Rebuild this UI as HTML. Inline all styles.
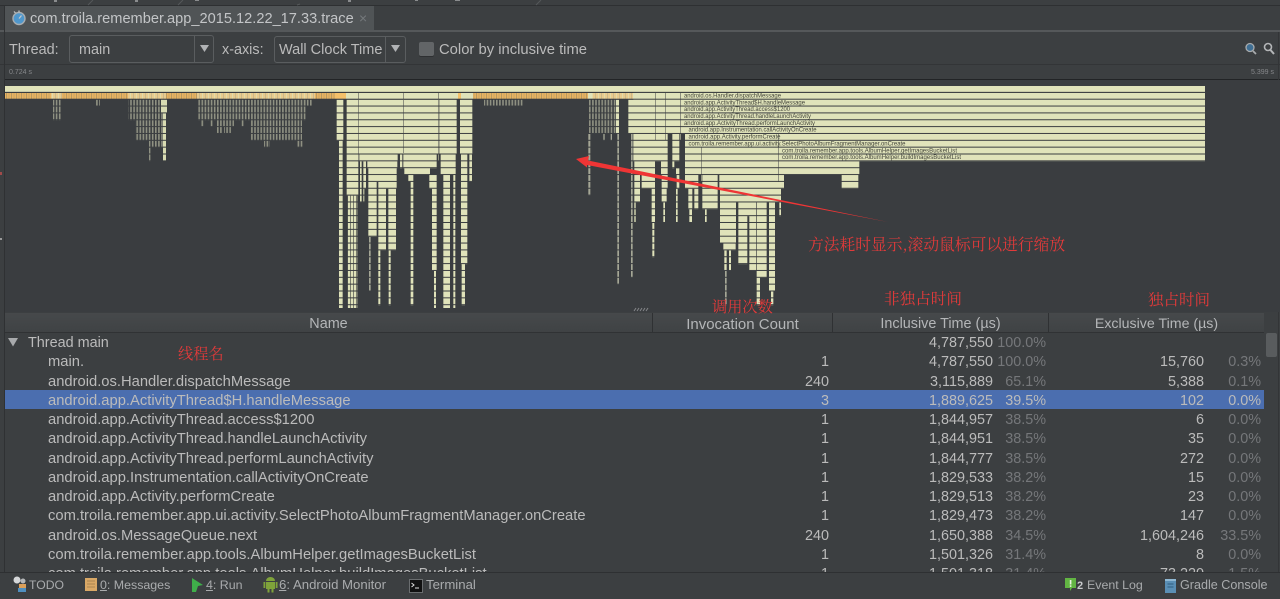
<!DOCTYPE html>
<html><head><meta charset="utf-8"><style>
html,body{margin:0;padding:0;background:#3c3f41}
#r{position:relative;width:1280px;height:599px;overflow:hidden;background:#3c3f41;font-family:"Liberation Sans","Noto Sans CJK SC",sans-serif;color:#bbb;font-size:14.4px;filter:blur(.3px)}
.a{position:absolute;white-space:nowrap}
.t{position:absolute;white-space:nowrap;line-height:18px;height:18px}
.n{left:48px;font-size:14.75px}
.c{position:absolute;right:451px;white-space:nowrap;line-height:18px}
.i{position:absolute;right:287px;white-space:nowrap;line-height:18px}
.ip{position:absolute;right:234px;white-space:nowrap;line-height:18px;color:#75777a}
.e{position:absolute;right:76px;white-space:nowrap;line-height:18px}
.ep{position:absolute;right:19px;white-space:nowrap;line-height:18px;color:#75777a}
.h{position:absolute;top:313px;height:20px;line-height:23px;text-align:center;color:#b4b6b8;background:linear-gradient(#46494b,#3f4244);border-right:1px solid #2f3133;box-sizing:border-box}
.z{color:#e23a3a;font-family:"Noto Serif CJK SC","Noto Sans CJK SC",serif;position:absolute;white-space:nowrap;line-height:18px}
.s{position:absolute;top:576px;line-height:18px;font-size:12.6px;color:#a9abad;white-space:nowrap}
.s u{text-decoration:underline}
</style></head><body><div id="r">

<!-- top strip -->
<div class="a" style="left:0;top:0;width:1280px;height:5px;background:#3c3f41;border-bottom:1px solid #2e3032"></div>
<svg class="a" style="left:0;top:0" width="1280" height="6"><g stroke="#55585a" fill="none"><path d="M88 5l5-5M178 5l5-5M300 4l-3 1M536 5l5-5"/></g><g fill="#8a8c8e"><rect x="54" y="0" width="3" height="2"/><rect x="135" y="0" width="3" height="2"/><rect x="195" y="0" width="4" height="1"/><rect x="348" y="0" width="3" height="2"/><rect x="415" y="0" width="3" height="1"/><rect x="455" y="0" width="5" height="1"/></g></svg>

<!-- tab row -->
<div class="a" style="left:5px;top:6px;width:369px;height:24px;background:#505456"></div>
<div class="a" style="left:0;top:30px;width:1280px;height:2px;background:#55585a"></div>
<div class="a" style="left:30px;top:10px;font-size:14.6px;line-height:19px;color:#c3c5c7">com.troila.remember.app_2015.12.22_17.33.trace</div>
<div class="a" style="left:359px;top:11px;font-size:14px;line-height:14px;color:#75797c">×</div>
<svg class="a" style="left:10px;top:8px" width="18" height="20"><circle cx="9" cy="10.5" r="6" fill="#4f97cc" stroke="#a8adb0" stroke-width="1.4"/><path d="M9 10.5l2.5-3M9 2.5v2M4 3.5l1.5 1.5" stroke="#c5c8ca" stroke-width="1.2" fill="none"/></svg>

<!-- toolbar -->
<div class="a" style="left:9px;top:41px;line-height:18px">Thread:</div>
<div class="a" style="left:69px;top:35px;width:145px;height:28px;box-sizing:border-box;border:1px solid #5a5d5f;border-radius:3px;background:#3c3f41"></div>
<div class="a" style="left:194px;top:35px;width:1px;height:28px;background:#5a5d5f"></div>
<div class="a" style="left:79px;top:41px;line-height:18px">main</div>
<svg class="a" style="left:199px;top:44px" width="12" height="9"><path d="M1 1h9l-4.500 7z" fill="#b0b2b4"/></svg>
<div class="a" style="left:222px;top:41px;line-height:18px">x-axis:</div>
<div class="a" style="left:274px;top:36px;width:132px;height:27px;box-sizing:border-box;border:1px solid #5a5d5f;border-radius:3px"></div>
<div class="a" style="left:385px;top:36px;width:1px;height:27px;background:#5a5d5f"></div>
<div class="a" style="left:279px;top:41px;line-height:18px;font-size:14.5px">Wall Clock Time</div>
<svg class="a" style="left:390px;top:44px" width="12" height="9"><path d="M1 1h9l-4.500 7z" fill="#b0b2b4"/></svg>
<div class="a" style="left:419px;top:42px;width:15px;height:14px;background:#626567;border-radius:2px;box-shadow:0 1px 0 #2e3032"></div>
<div class="a" style="left:439px;top:41px;line-height:18px;font-size:14.8px">Color by inclusive time</div>
<svg class="a" style="left:1243px;top:41px" width="34" height="15"><circle cx="7" cy="6.500" r="4" fill="#3f6f94" stroke="#a8abad" stroke-width="1.300"/><path d="M10 10l3 3" stroke="#a8abad" stroke-width="1.800"/><circle cx="25" cy="6" r="3.500" fill="none" stroke="#b4b6b8" stroke-width="1.600"/><path d="M27.500 9l3.500 4" stroke="#b4b6b8" stroke-width="2"/></svg>

<!-- timeline strip -->
<div class="a" style="left:0;top:64px;width:1280px;height:1px;background:#333537"></div>
<div class="a" style="left:9px;top:69px;font-size:7px;line-height:8px;color:#85878a">0.724 s</div>
<div class="a" style="right:6px;top:69px;font-size:7px;line-height:8px;color:#85878a">5.399 s</div>
<div class="a" style="left:5px;top:79px;width:1275px;height:1px;background:#222426"></div>

<!-- left edge -->
<div class="a" style="left:4px;top:6px;width:1px;height:566px;background:#2f3133"></div>
<div class="a" style="left:1278px;top:32px;width:1px;height:540px;background:#333537"></div>
<div class="a" style="left:0;top:172px;width:2px;height:3px;background:#a04a4a"></div>
<div class="a" style="left:0;top:238px;width:2px;height:2px;background:#9a9a9a"></div>

<!-- flame chart -->
<svg class="a" style="left:0;top:80px" width="1280" height="232" viewBox="0 80 1280 232">
<defs>
<pattern id="o" width="5" height="10" patternUnits="userSpaceOnUse"><rect width="5" height="10" fill="#e9b360"/><rect x="1" width="1" height="10" fill="#b89a62"/><rect x="3.500" width="1" height="10" fill="#c9a566"/></pattern>
<pattern id="m" width="6" height="10" patternUnits="userSpaceOnUse"><rect width="6" height="10" fill="#e8cb8e"/><rect x="1" width="1" height="10" fill="#cbb98a"/><rect x="4" width="1" height="10" fill="#e3dba8"/></pattern>
<pattern id="k" width="3.100" height="10" patternUnits="userSpaceOnUse"><rect width="1.600" height="10" fill="#8f9182"/></pattern>
<pattern id="s" width="3" height="10" patternUnits="userSpaceOnUse"><rect width="2" height="10" fill="#dfe2b9"/><rect x="2" width="1" height="10" fill="#7b7d6e"/></pattern>
<pattern id="g" width="10" height="6.850" y="86" patternUnits="userSpaceOnUse"><rect y="5.850" width="10" height="1" fill="#3a3d40"/></pattern>
</defs>
<rect x="5" y="80" width="1275" height="232" fill="#3a3d40"/>
<rect x="5" y="86" width="1200" height="6" fill="#e0e3ba"/>
<!-- orange row -->
<rect x="5" y="93" width="332" height="6" fill="url(#o)"/>
<rect x="51" y="93" width="11" height="6" fill="url(#m)"/>
<rect x="128" y="93" width="38" height="6" fill="url(#m)"/>
<rect x="197" y="93" width="118" height="6" fill="url(#m)"/>
<rect x="335" y="93" width="12" height="6" fill="#f4c06a"/>
<rect x="346" y="93" width="112" height="6" fill="#e0e3ba"/>
<rect x="458" y="93" width="3" height="6" fill="#f4c06a"/>
<rect x="461" y="93" width="12" height="6" fill="#e0e3ba"/>
<rect x="473" y="93" width="115" height="6" fill="url(#o)"/>
<rect x="588" y="93" width="4" height="6" fill="#e0e3ba"/>
<rect x="592" y="93" width="41" height="6" fill="url(#m)"/>
<rect x="633" y="93" width="572" height="6" fill="#e0e3ba"/>
<!-- ticks -->
<g fill="url(#k)">
<rect x="53" y="99.700" width="8" height="20.500"/>
<rect x="95" y="99.700" width="5" height="6.800"/>
<rect x="128.500" y="99.700" width="36" height="20.500"/>
<rect x="135" y="120.200" width="28" height="20.600"/>
<rect x="149" y="140.800" width="16" height="6.800"/>
<rect x="149" y="147.600" width="2" height="13.700"/>
<rect x="198" y="99.700" width="108" height="20.500"/>
<rect x="305" y="99.700" width="8" height="6.800"/>
<rect x="201" y="120.200" width="3" height="6.800"/>
<rect x="210" y="120.200" width="3" height="6.800"/>
<rect x="217" y="120.200" width="17" height="6.800"/>
<rect x="241" y="120.200" width="3" height="6.800"/>
<rect x="251" y="120.200" width="51" height="20.600"/>
<rect x="217" y="127" width="6" height="6.800"/>
<rect x="224" y="127" width="7" height="6.800"/>
<rect x="264" y="140.800" width="6" height="6.800"/>
<rect x="297" y="140.800" width="6" height="6.800"/>
<rect x="484" y="99.700" width="39" height="6.800"/>
<rect x="588" y="99.700" width="28" height="34.200"/>
</g>
<rect x="161" y="99.700" width="6" height="13" fill="#d8dbb2"/>
<rect x="163" y="112.700" width="3" height="48" fill="#d8dbb2"/>
<rect x="347.700" y="195.600" width="9.600" height="112.500" fill="url(#s)"/>
<!-- solid columns, left (coords: x*3, row index) -->
<g transform="translate(0,86) scale(.33333,6.850)" fill="#e0e3ba">
<path d="M1010 2H1030V8H1010zM1017 8H1028V33H1017zM1040 2H1075V16H1040zM1076 2H1314V10H1076zM1078 10H1193V11H1078zM1102 11H1192V12H1102zM1105 12H1190V14H1105zM1105 14H1130V22H1105zM1135 14H1158V24H1135zM1158 14H1190V15H1158zM1165 15H1188V24H1165zM1080 11H1085V17H1080zM1090 11H1098V15H1090zM1090 15H1093V17H1090zM1200 10H1207V12H1200zM1210 10H1310V12H1210zM1213 12H1290V13H1213zM1225 13H1240V14H1225zM1232 14H1240V32H1232zM1288 13H1296V15H1288zM1296 13H1310V27H1296zM1302 27H1308V33H1302zM1318 2H1370V10H1318zM1322 10H1367V13H1322zM1330 13H1350V33H1330zM1360 12H1366V33H1360zM1380 2H1417V10H1380zM1383 10H1402V26H1383zM1385 26H1395V32H1385zM1408 10H1416V14H1408zM1135 24H1141V32H1135zM1166 24H1172V32H1166z"/>
<path fill="#a5a796" d="M1107 22H1112V30H1107z"/>
</g>
<!-- solid columns, right -->
<g transform="translate(570,86) scale(.33333,6.850)" fill="#e0e3ba">
<path d="M138 2H147V7H138zM175 2H190V7H175zM190 2H1905V7H190zM190 7H293V11H190zM307 7H328V11H307zM345 7H1905V11H345zM1905 1H190V2H1905zM193 11H255V13H193zM273 11H293V13H273zM307 11H313V12H307zM318 12H328V13H318zM345 11H868V13H345zM193 13H210V17H193zM215 13H255V15H215zM275 13H293V15H275zM320 13H328V15H320zM345 13H385V15H345zM397 13H443V18H397zM448 13H642V15H448zM815 13H865V15H815zM245 15H255V20H245zM247 20H253V25H247zM275 15H290V17H275zM280 17H285V20H280zM318 15H323V20H318zM355 15H367V18H355zM373 15H385V18H373zM358 18H366V20H358zM405 18H410V20H405zM193 17H197V20H193zM450 15H628V17H450zM450 17H498V23H450zM460 23H497V24H460zM463 24H470V27H463zM477 24H483V27H477zM505 17H558V19H505zM505 19H532V26H505zM538 19H558V27H538zM560 17H590V28H560zM560 28H570V32H560zM597 17H615V30H597zM603 30H610V32H603zM628 15H633V19H628zM348 13H350V15H348z"/>
<path fill="#a5a796" d="M55 7H61V16H55zM142 7H147V29H142zM183 7H188V28H183zM465 27H470V32H465zM100 7H104V8H100zM122 7H126V8H122z"/>
</g>
<!-- verticals -->
<g fill="#8f917f">
<rect x="358" y="93" width="1" height="68"/><rect x="438" y="93" width="1" height="68"/><rect x="403" y="93" width="1" height="60"/>
<rect x="655" y="93" width="1" height="47"/><rect x="665" y="93" width="1" height="47"/><rect x="680" y="93" width="1" height="47"/><rect x="778" y="134" width="1" height="48"/><rect x="701" y="147" width="1" height="34"/>
</g>
<!-- row gaps -->
<rect x="5" y="86" width="1200" height="226" fill="url(#g)"/>
<rect x="5" y="308" width="1275" height="5" fill="#3a3d40"/>
<!-- row labels -->
<g font-family="Liberation Sans,sans-serif" font-size="6.300" fill="#44463c">
<text x="684" y="97.500" textLength="97" lengthAdjust="spacingAndGlyphs">android.os.Handler.dispatchMessage</text>
<text x="684" y="104.300" textLength="121" lengthAdjust="spacingAndGlyphs">android.app.ActivityThread$H.handleMessage</text>
<text x="684" y="111.200" textLength="106" lengthAdjust="spacingAndGlyphs">android.app.ActivityThread.access$1200</text>
<text x="684" y="118" textLength="127" lengthAdjust="spacingAndGlyphs">android.app.ActivityThread.handleLaunchActivity</text>
<text x="684" y="124.900" textLength="131" lengthAdjust="spacingAndGlyphs">android.app.ActivityThread.performLaunchActivity</text>
<text x="688.500" y="131.700" textLength="128" lengthAdjust="spacingAndGlyphs">android.app.Instrumentation.callActivityOnCreate</text>
<text x="688.500" y="138.600" textLength="92" lengthAdjust="spacingAndGlyphs">android.app.Activity.performCreate</text>
<text x="688.500" y="145.400" textLength="217" lengthAdjust="spacingAndGlyphs">com.troila.remember.app.ui.activity.SelectPhotoAlbumFragmentManager.onCreate</text>
<text x="782" y="152.300" textLength="175" lengthAdjust="spacingAndGlyphs">com.troila.remember.app.tools.AlbumHelper.getImagesBucketList</text>
<text x="782" y="159.100" textLength="179" lengthAdjust="spacingAndGlyphs">com.troila.remember.app.tools.AlbumHelper.buildImagesBucketList</text>
</g>
<!-- arrow -->
<polygon points="576,159 589,156 588,160.500 888,222 587,165 587,167.500" fill="#ef3535"/>
<path d="M634 311l2-3M637 311l2-3M640 311l2-3M643 311l2-3M646 311l2-3" stroke="#85878a" stroke-width="1"/>
</svg>

<!-- table header -->
<div class="h" style="left:5px;width:648px">Name</div>
<div class="h" style="left:653px;width:180px;font-size:15px">Invocation Count</div>
<div class="h" style="left:833px;width:216px">Inclusive Time (µs)</div>
<div class="h" style="left:1049px;width:215px;border-right:0;font-size:14.2px">Exclusive Time (µs)</div>
<div class="a" style="left:5px;top:332px;width:1259px;height:1px;background:#303234"></div>

<!-- selection -->
<div class="a" style="left:5px;top:390px;width:1259px;height:19px;background:#4b6eaf"></div>

<!-- rows -->
<svg class="a" style="left:8px;top:338px" width="11" height="9"><path d="M0 0h10l-5 8.500z" fill="#a8aaac"/></svg>
<div class="a" style="left:0;top:1px;width:1280px;height:571px;overflow:hidden">
<div class="t" style="left:28px;top:333px">Thread main</div>
<div class="i" style="top:333px">4,787,550</div><div class="ip" style="top:333px">100.0%</div>

<div class="t n" style="top:352px">main.</div>
<div class="c" style="top:352px">1</div><div class="i" style="top:352px">4,787,550</div><div class="ip" style="top:352px">100.0%</div><div class="e" style="top:352px">15,760</div><div class="ep" style="top:352px">0.3%</div>

<div class="t n" style="top:372px">android.os.Handler.dispatchMessage</div>
<div class="c" style="top:372px">240</div><div class="i" style="top:372px">3,115,889</div><div class="ip" style="top:372px">65.1%</div><div class="e" style="top:372px">5,388</div><div class="ep" style="top:372px">0.1%</div>

<div class="t n" style="top:391px">android.app.ActivityThread$H.handleMessage</div>
<div class="c" style="top:391px">3</div><div class="i" style="top:391px">1,889,625</div><div class="ip" style="top:391px;color:#bbb">39.5%</div><div class="e" style="top:391px">102</div><div class="ep" style="top:391px;color:#bbb">0.0%</div>

<div class="t n" style="top:410px">android.app.ActivityThread.access$1200</div>
<div class="c" style="top:410px">1</div><div class="i" style="top:410px">1,844,957</div><div class="ip" style="top:410px">38.5%</div><div class="e" style="top:410px">6</div><div class="ep" style="top:410px">0.0%</div>

<div class="t n" style="top:429px">android.app.ActivityThread.handleLaunchActivity</div>
<div class="c" style="top:429px">1</div><div class="i" style="top:429px">1,844,951</div><div class="ip" style="top:429px">38.5%</div><div class="e" style="top:429px">35</div><div class="ep" style="top:429px">0.0%</div>

<div class="t n" style="top:449px">android.app.ActivityThread.performLaunchActivity</div>
<div class="c" style="top:449px">1</div><div class="i" style="top:449px">1,844,777</div><div class="ip" style="top:449px">38.5%</div><div class="e" style="top:449px">272</div><div class="ep" style="top:449px">0.0%</div>

<div class="t n" style="top:468px">android.app.Instrumentation.callActivityOnCreate</div>
<div class="c" style="top:468px">1</div><div class="i" style="top:468px">1,829,533</div><div class="ip" style="top:468px">38.2%</div><div class="e" style="top:468px">15</div><div class="ep" style="top:468px">0.0%</div>

<div class="t n" style="top:487px">android.app.Activity.performCreate</div>
<div class="c" style="top:487px">1</div><div class="i" style="top:487px">1,829,513</div><div class="ip" style="top:487px">38.2%</div><div class="e" style="top:487px">23</div><div class="ep" style="top:487px">0.0%</div>

<div class="t n" style="top:506px">com.troila.remember.app.ui.activity.SelectPhotoAlbumFragmentManager.onCreate</div>
<div class="c" style="top:506px">1</div><div class="i" style="top:506px">1,829,473</div><div class="ip" style="top:506px">38.2%</div><div class="e" style="top:506px">147</div><div class="ep" style="top:506px">0.0%</div>

<div class="t n" style="top:526px">android.os.MessageQueue.next</div>
<div class="c" style="top:526px">240</div><div class="i" style="top:526px">1,650,388</div><div class="ip" style="top:526px">34.5%</div><div class="e" style="top:526px">1,604,246</div><div class="ep" style="top:526px">33.5%</div>

<div class="t n" style="top:545px">com.troila.remember.app.tools.AlbumHelper.getImagesBucketList</div>
<div class="c" style="top:545px">1</div><div class="i" style="top:545px">1,501,326</div><div class="ip" style="top:545px">31.4%</div><div class="e" style="top:545px">8</div><div class="ep" style="top:545px">0.0%</div>

<div class="t n" style="top:564px">com.troila.remember.app.tools.AlbumHelper.buildImagesBucketList</div>
<div class="c" style="top:564px">1</div><div class="i" style="top:564px">1,501,318</div><div class="ip" style="top:564px">31.4%</div><div class="e" style="top:564px">73,220</div><div class="ep" style="top:564px">1.5%</div>
</div>

<!-- scrollbar -->
<div class="a" style="left:1266px;top:333px;width:11px;height:24px;background:#595c5e;border-radius:2px"></div>

<!-- annotations -->
<div class="z" style="left:808px;top:235px;font-size:15.750px">方法耗时显示,滚动鼠标可以进行缩放</div>
<div class="z" style="left:712px;top:298px;font-size:15.200px">调用次数</div>
<div class="z" style="left:884px;top:289px;font-size:15.600px">非独占时间</div>
<div class="z" style="left:1148px;top:290px;font-size:15.500px">独占时间</div>
<div class="z" style="left:178px;top:345px;font-size:15.200px">线程名</div>

<!-- status bar -->
<div class="a" style="left:0;top:572px;width:1280px;height:27px;background:#3c3f41;border-top:1px solid #2e3032;box-sizing:border-box"></div>
<svg class="a" style="left:0;top:574px" width="1280" height="22">
<circle cx="17" cy="6" r="3.500" fill="#d5d7d9"/><circle cx="23" cy="7" r="2.500" fill="#b5b7b9"/><rect x="19" y="10" width="7" height="5" fill="#dca05a"/><rect x="18" y="14" width="8" height="4" fill="#4f8fc0"/>
<rect x="85" y="4" width="12" height="13" fill="#d9a866"/><path d="M87 7h8M87 10h8M87 13h8" stroke="#a98450" stroke-width="1"/>
<path d="M192 4l11 7-5 1-2 6h-4z" fill="#3fae4a"/>
<path d="M266 8h9v7h-9z" fill="#7fa33a"/><path d="M266 7a4.500 4 0 0 1 9 0z" fill="#7fa33a"/><rect x="263.500" y="8" width="1.800" height="6" fill="#7fa33a"/><rect x="275.700" y="8" width="1.800" height="6" fill="#7fa33a"/><rect x="267.500" y="15" width="2" height="3.500" fill="#7fa33a"/><rect x="271.500" y="15" width="2" height="3.500" fill="#7fa33a"/>
<rect x="409.500" y="5.500" width="13" height="13" fill="#111" stroke="#6a6d6f"/><path d="M411.500 9l2.500 2-2.500 2M415 14h4" stroke="#ddd" fill="none"/>
<path d="M1065 4h11v10h-4l-2 3v-3h-5z" fill="#62b543"/><rect x="1069.800" y="6" width="1.600" height="4.500" fill="#e8f2e0"/><rect x="1069.800" y="11.300" width="1.600" height="1.600" fill="#e8f2e0"/>
<rect x="1165" y="5" width="11" height="14" fill="#5a8fb5"/><rect x="1165" y="5" width="11" height="2" fill="#8fb8d3"/><path d="M1167.500 10h6M1167.500 13h6" stroke="#2f5d7e"/>
</svg>
<div class="s" style="left:29px;font-size:12.2px">TODO</div>
<div class="s" style="left:100px;font-size:12.4px"><u>0</u>: Messages</div>
<div class="s" style="left:206px;font-size:12.4px"><u>4</u>: Run</div>
<div class="s" style="left:279px;font-size:13.2px"><u>6</u>: Android Monitor</div>
<div class="s" style="left:426px;font-size:13.2px">Terminal</div>
<div class="s" style="left:1077px;font-weight:bold;font-size:11px;color:#c8cacc;top:577px">2</div>
<div class="s" style="left:1087px;font-size:12.4px">Event Log</div>
<div class="s" style="left:1180px;font-size:12.6px">Gradle Console</div>
</div></body></html>
